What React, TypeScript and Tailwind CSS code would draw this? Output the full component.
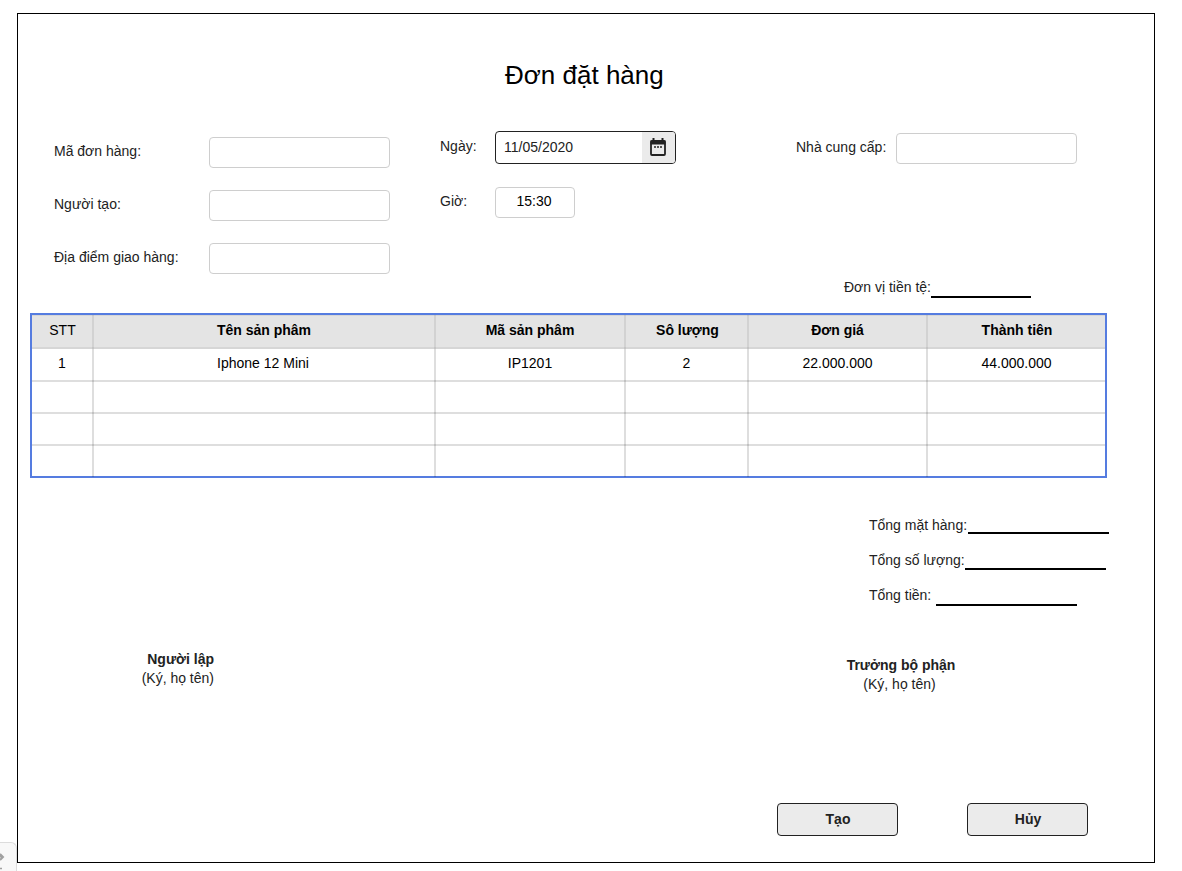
import type { ReactNode } from "react";

const columns = [
  { title: "STT", width: "w-[62px]", head: "pl-px" },
  { title: "Tên sản phâm", width: "w-[342px]", head: "font-bold" },
  { title: "Mã sản phâm", width: "w-[190px]", head: "font-bold" },
  { title: "Sô lượng", width: "w-[123px]", head: "pl-0.5 font-bold" },
  { title: "Đơn giá", width: "w-[179px]", head: "font-bold" },
  { title: "Thành tiên", width: "w-[177px]", head: "pl-px font-bold" },
];

const rows = [
  { height: "h-[33px]", cells: ["1", "Iphone 12 Mini", "IP1201", "2", "22.000.000", "44.000.000"] },
  { height: "h-8", cells: ["", "", "", "", "", ""] },
  { height: "h-8", cells: ["", "", "", "", "", ""] },
  { height: "h-[31px]", cells: ["", "", "", "", "", ""] },
];

function Box({ className = "w-[181px]", children }: { className?: string; children?: ReactNode }) {
  return (
    <div className={`h-[31px] shrink-0 rounded border border-[#cecece] text-center leading-[27px] text-black ${className}`}>
      {children}
    </div>
  );
}

function CalendarIcon() {
  return (
    <svg width="16" height="18" viewBox="0 0 16 18" fill="none">
      <rect x="1" y="3" width="14" height="14" rx="1" stroke="#222" strokeWidth="1.8" />
      <path d="M0.5 2.5h15V6.5H0.5z M2.5 0h2v3h-2z M11.5 0h2v3h-2z" fill="#222" />
      <path d="M4 8h2v2H4z M7 8h2v2H7z M10 8h2v2h-2z" fill="#555" />
    </svg>
  );
}

function Field({ label }: { label: string }) {
  return (
    <div className="flex h-[31px]">
      <span className="w-[155px] pt-1">{label}</span>
      <Box />
    </div>
  );
}

function Table() {
  return (
    <div className="ml-3 h-[165px] w-[1077px] border-2 border-[#557ce0] text-black">
      <div className="flex h-[34px] border-b-2 border-[#d6d6d6] bg-[#e4e4e4] shadow-[inset_0_1px_#d6d6d6]">
        {columns.map((c, i) => (
          <div
            key={c.title}
            className={`-mb-0.5 shrink-0 border-black/[.08] pt-[5px] text-center leading-5 ${c.width} ${c.head} ${i < 5 ? "border-r-2" : ""}`}
          >
            {c.title}
          </div>
        ))}
      </div>
      {rows.map((r, n) => (
        <div key={n} className={`flex ${r.height} ${n < 3 ? "border-b-2 border-black/[.13]" : ""}`}>
          {r.cells.map((t, i) => (
            <div
              key={i}
              className={`shrink-0 border-black/[.13] text-center leading-[29px] ${n < 3 ? "-mb-0.5" : ""} ${columns[i].width} ${i < 5 ? "border-r-2" : ""} ${i === 1 ? "pr-0.5" : ""}`}
            >
              {t}
            </div>
          ))}
        </div>
      ))}
    </div>
  );
}

function Total({ label, gap, drop }: { label: string; gap: string; drop: string }) {
  return (
    <div className="flex h-[35px] items-start">
      <span className={gap}>{label}</span>
      <span className={`h-0.5 w-[141px] bg-black ${drop}`} />
    </div>
  );
}

function Button({ children }: { children: ReactNode }) {
  return (
    <button className="h-[33px] w-[121px] rounded border border-[#222] bg-[#ebebeb] pb-0.5 pl-px text-center font-bold">
      {children}
    </button>
  );
}

export default function App() {
  return (
    <div className="flex h-[871px] w-[1182px] items-start overflow-hidden bg-white font-['Liberation_Sans',Arial,sans-serif] text-sm leading-5 text-[#222]">
      <div className="mt-[842px] h-[29px] w-[17px] shrink-0 overflow-hidden rounded-tr-md border-t border-r border-[#dcdcdc] bg-[#f8f8f8]">
        <svg width="16" height="28" viewBox="0 0 16 28">
          <path d="M0 13.5h3M0 11l3 3-3 3" fill="none" stroke="#a0a0a0" strokeWidth="2" />
          <path d="M0 25.5h2" stroke="#a0a0a0" strokeWidth="1.5" />
        </svg>
      </div>
      <main className="mt-[13px] h-[850px] w-[1138px] shrink-0 border border-black">
        <h1 className="mt-[41px] h-[76px] pl-[487px] text-[26px] leading-10 text-black">Đơn đặt hàng</h1>

        <section className="flex h-[130px] pl-9">
          <div className="flex w-[386px] flex-col gap-[22px] pt-1.5">
            <Field label="Mã đơn hàng:" />
            <Field label="Người tạo:" />
            <Field label="Địa điểm giao hàng:" />
          </div>
          <div className="flex w-[356px] flex-col gap-[23px]">
            <div className="flex h-[33px]">
              <span className="w-[55px] pt-[5px]">Ngày:</span>
              <div className="flex h-[33px] w-[181px] overflow-hidden rounded border border-[#222]">
                <span className="w-[146px] pt-[5px] pl-2">11/05/2020</span>
                <span className="w-[33px] bg-[#ebebeb] pt-1.5 pl-2">
                  <CalendarIcon />
                </span>
              </div>
            </div>
            <div className="flex h-[31px]">
              <span className="w-[55px] pt-1">Giờ:</span>
              <Box className="w-20 pr-0.5">15:30</Box>
            </div>
          </div>
          <div className="flex pt-0.5">
            <span className="w-[100px] pt-1">Nhà cung cấp:</span>
            <Box />
          </div>
        </section>

        <div className="flex h-[52px] pt-[16px] pl-[826px]">
          <span className="w-[87px] shrink-0 whitespace-nowrap">Đơn vị tiền tệ:</span>
          <span className="mt-[19px] h-0.5 w-[100px] bg-black" />
        </div>

        <Table />

        <section className="mt-[37px] h-[135px] pl-[851px]">
          <Total label="Tổng mặt hàng:" gap="w-[99px]" drop="mt-[17px]" />
          <Total label="Tổng số lượng:" gap="w-24" drop="mt-[18px]" />
          <Total label="Tổng tiền:" gap="w-[67px]" drop="mt-[19px]" />
        </section>

        <section className="flex h-[153px] items-start justify-between pr-[198px] pl-[123px] leading-[19px] whitespace-nowrap">
          <div className="w-[73px] text-right">
            <div className="font-bold">Người lập</div>
            <div>(Ký, họ tên)</div>
          </div>
          <div className="mt-1.5 w-[110px] text-center">
            <div className="font-bold">Trưởng bộ phận</div>
            <div className="pr-[3px]">(Ký, họ tên)</div>
          </div>
        </section>

        <div className="flex gap-[69px] pl-[759px]">
          <Button>Tạo</Button>
          <Button>Hủy</Button>
        </div>
      </main>
    </div>
  );
}
